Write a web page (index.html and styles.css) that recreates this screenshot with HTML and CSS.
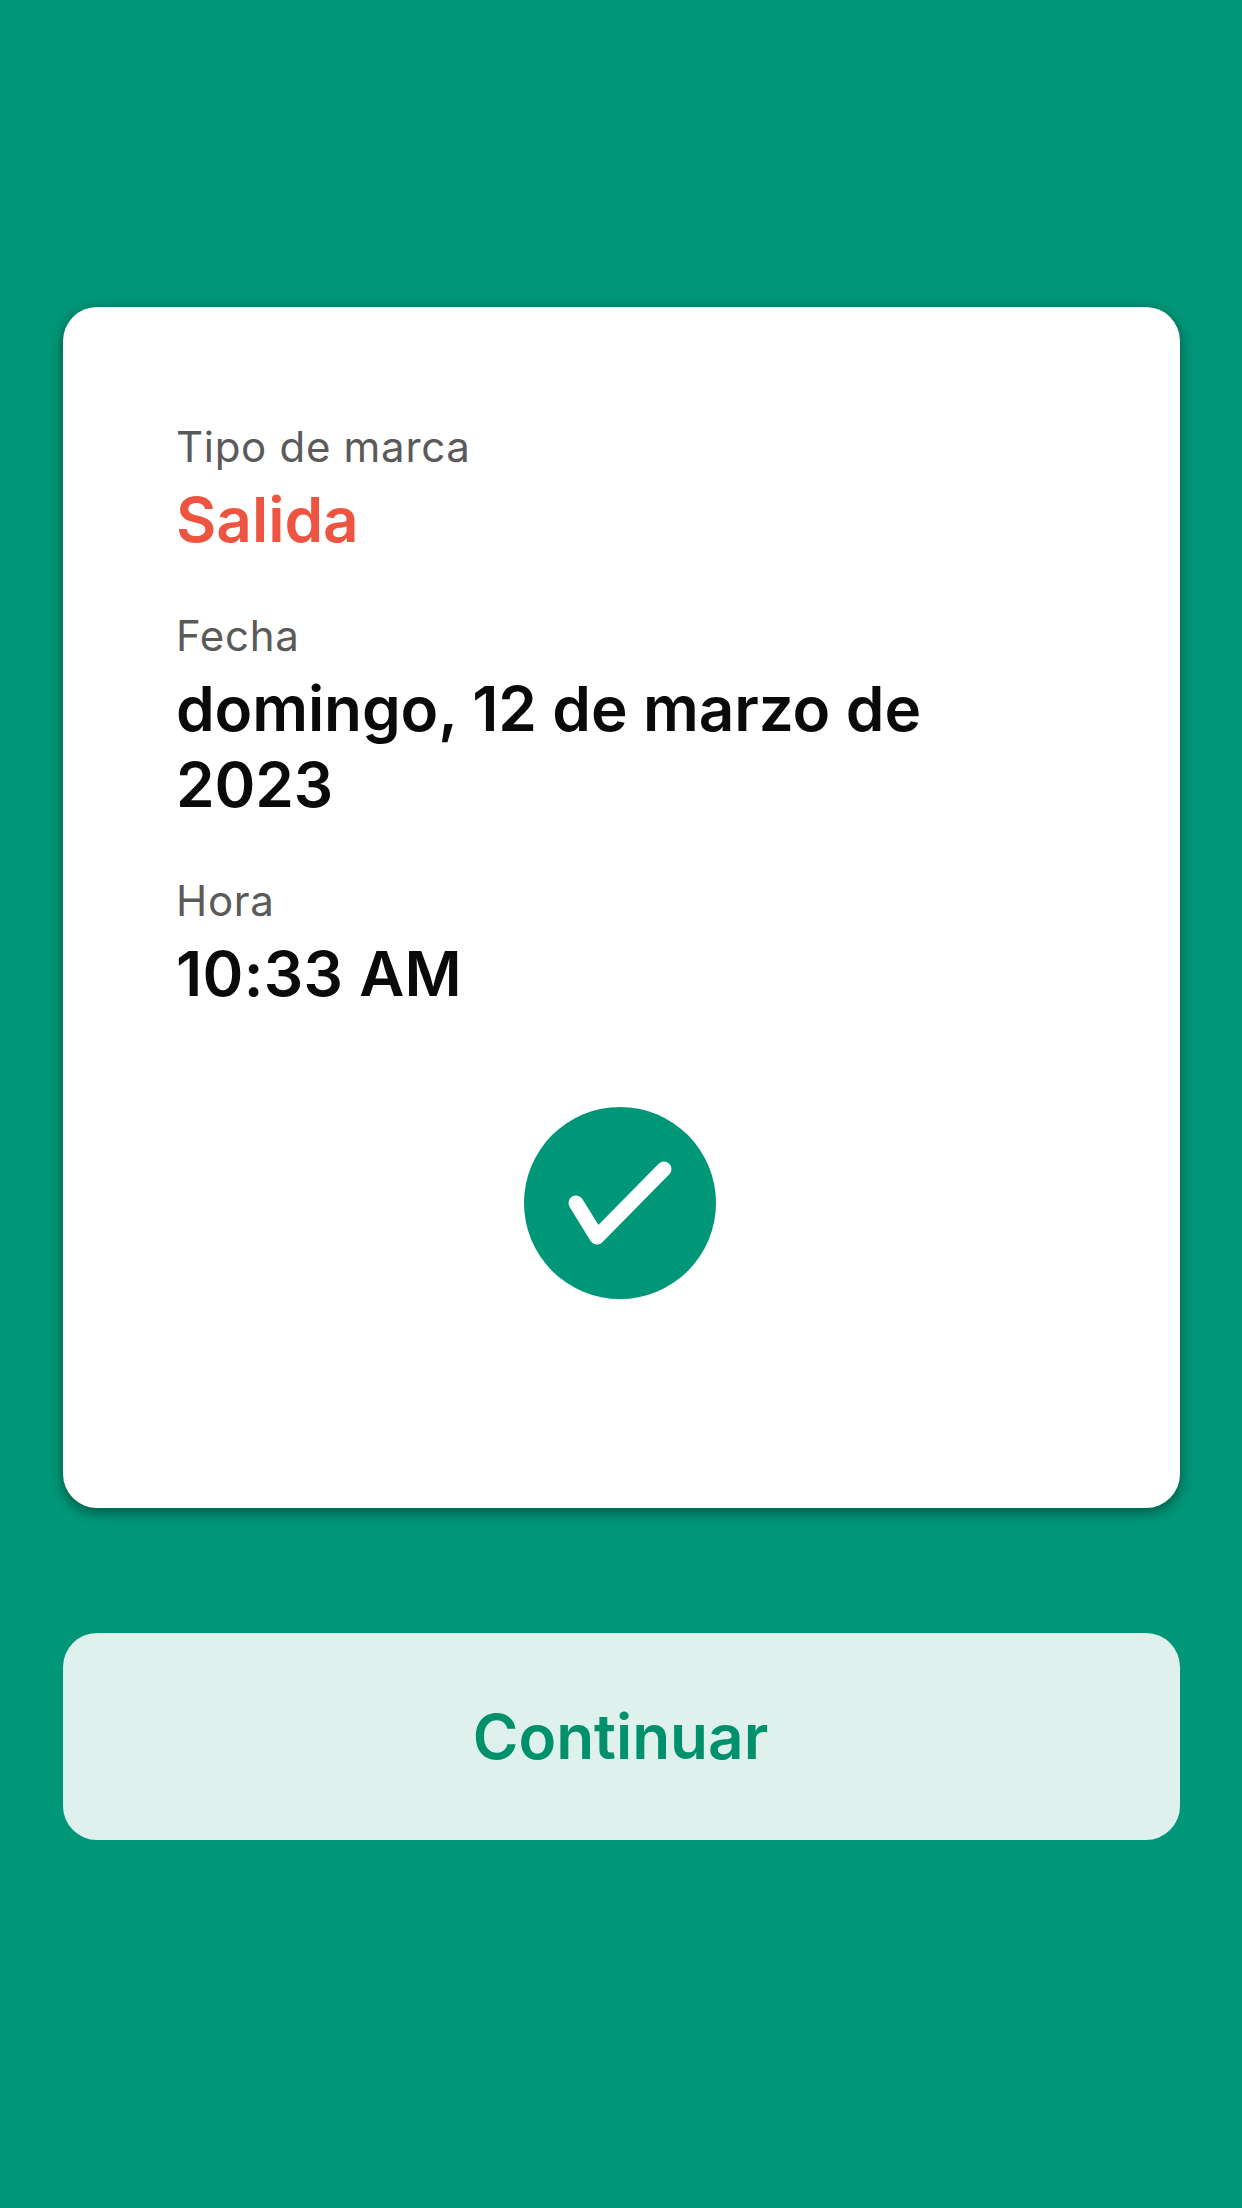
FILE: index.html
```html
<!DOCTYPE html>
<html lang="es">
<head>
    <meta charset="UTF-8">
    <meta name="viewport" content="width=device-width, initial-scale=1.0">
    <title>Marca registrada</title>
    <link rel="stylesheet" href="styles.css">
</head>
<body>
    <main class="container">
        <section class="card">
            <dl class="details">
                <dt>Tipo de marca</dt>
                <dd class="type">Salida</dd>
                <dt>Fecha</dt>
                <dd class="date">domingo, 12 de marzo de<br>2023</dd>
                <dt>Hora</dt>
                <dd class="time">10:33 AM</dd>
            </dl>
            <svg class="check" viewBox="0 0 192 192" aria-hidden="true">
                <circle cx="96" cy="96" r="96" fill="#009778"/>
                <path d="M52 96L73 130L140 62" fill="none" stroke="#fff" stroke-width="15" stroke-linecap="round" stroke-linejoin="round"/>
            </svg>
        </section>
        <button type="button" class="continue">Continuar</button>
    </main>
</body>
</html>
```

FILE: styles.css
```css
* { box-sizing: border-box; }
body { margin: 0; background-color: #009778; font-family: Inter, "Liberation Sans", sans-serif; color: #0a0a0a; }
.container { min-height: 2208px; padding: 307px 62px 0 63px; }
.card { height: 1201px; padding: 111px 117px 0 113px; background-color: #fff; border-radius: 34px; box-shadow: 0 4px 14px rgba(0,0,0,0.45); }
.details { margin: 0; }
dt { height: 64px; font-size: 42px; line-height: 58px; font-weight: 400; color: #5a5a5a; letter-spacing: 0.7px; }
dd { margin: 0 0 49px; font-size: 62px; line-height: 76px; font-weight: 600; white-space: nowrap; }
.type { color: #ee5541; }
.date { letter-spacing: -0.1px; }
.time { letter-spacing: 0.3px; }
.check { display: block; width: 192px; height: 192px; margin: 95px auto 0; }
.continue { display: block; width: 100%; height: 207px; margin-top: 125px; padding: 0 2px 0 0; border: none; border-radius: 34px; background-color: #dff1ec; color: #00916c; font-family: inherit; font-size: 62px; font-weight: 600; }
```
